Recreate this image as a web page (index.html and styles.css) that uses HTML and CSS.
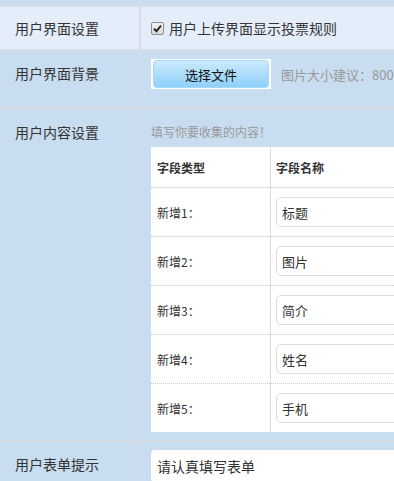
FILE: index.html
```html
<!DOCTYPE html>
<html lang="zh-CN">
<head>
  <meta charset="UTF-8">
  <title>用户设置</title>
  <link rel="stylesheet" href="styles.css">
</head>
<body>
  <div class="form">
    <div class="row row-top">
      <div class="label"></div>
      <div class="field"></div>
    </div>
    <div class="row row-hl">
      <div class="label label-mid">用户界面设置</div>
      <div class="field field-check">
        <span class="check">
          <svg width="9" height="9" viewBox="0 0 9 9"><path d="M1 4.8 L3.5 7.3 L8 1.5" fill="none" stroke="#222" stroke-width="2"/></svg>
        </span>
        <span>用户上传界面显示投票规则</span>
      </div>
    </div>
    <div class="row">
      <div class="label">用户界面背景</div>
      <div class="field field-file">
        <span class="file-wrap"><button class="file-btn">选择文件</button></span>
        <span class="tip">图片大小建议：800*480</span>
      </div>
    </div>
    <div class="row">
      <div class="label label-content">用户内容设置</div>
      <div class="field field-content">
        <p class="hint">填写你要收集的内容！</p>
        <table class="fields">
          <thead>
            <tr><th>字段类型</th><th>字段名称</th></tr>
          </thead>
          <tbody>
            <tr><td>新增1：</td><td><input class="edit" value="标题"></td></tr>
            <tr><td>新增2：</td><td><input class="edit" value="图片"></td></tr>
            <tr><td>新增3：</td><td><input class="edit" value="简介"></td></tr>
            <tr><td>新增4：</td><td><input class="edit" value="姓名"></td></tr>
            <tr><td>新增5：</td><td><input class="edit" value="手机"></td></tr>
          </tbody>
        </table>
      </div>
    </div>
    <div class="row">
      <div class="label">用户表单提示</div>
      <div class="field field-tip">
        <input class="tip-input" value="请认真填写表单">
      </div>
    </div>
  </div>
</body>
</html>
```

FILE: styles.css
```css
body { margin: 0; overflow: hidden; background: #c8ddf0; font-family: "Noto Sans CJK SC", "Noto Sans", sans-serif; color: #333; }
.form { width: 900px; }
.row { display: flex; border-bottom: 2px solid #d6dce2; background: #c8ddf0; }
.row-top { height: 5px; }
.row-hl { background: #e3eefa; height: 42px; }
.label { width: 124px; flex: none; padding: 12px 0 0 15px; border-right: 2px solid #d6dce2; font-size: 14px; line-height: 20px; }
.label-mid { padding-top: 11px; }
.label-content { padding-top: 13px; }
.field { flex: 1; padding: 0 10px; }
.field-check { display: flex; align-items: center; font-size: 14px; }
.check { width: 11px; height: 11px; border: 1px solid #8c8c8c; border-radius: 2px; background: linear-gradient(#f4f4f4, #d9d9d9); display: flex; align-items: center; justify-content: center; margin-right: 5px; }
.field-file { display: flex; align-items: center; padding-top: 8px; padding-bottom: 18px; }
.file-wrap { background: #fff; padding: 1px 2px; width: 116px; height: 28px; display: block; }
.file-btn { width: 116px; height: 28px; border: 1px solid #a6d9f7; border-radius: 4px; background: linear-gradient(#cbeafc, #8ed0f9); font-family: inherit; font-size: 13px; color: #111; padding: 0; }
.tip { margin-left: 10px; font-size: 13px; color: #999; white-space: nowrap; }
.field-content { padding-top: 15px; padding-bottom: 8px; }
.hint { margin: 0 0 7px; font-size: 12px; line-height: 16px; color: #999; }
.fields { border-collapse: collapse; background: #fff; font-size: 12px; }
.fields th { height: 40px; text-align: left; padding: 0 6px; font-weight: bold; }
.fields td { height: 48px; padding: 0 6px; border-top: 1px dotted #c8c8c8; }
.fields th:first-child, .fields td:first-child { width: 107px; }
.fields th:last-child, .fields td:last-child { width: 500px; border-left: 1px solid #dcdcdc; padding-left: 5px; }
.edit { width: 240px; height: 30px; box-sizing: border-box; border: 1px solid #dcdcdc; border-radius: 5px; padding: 0 5px; font-family: inherit; font-size: 13px; color: #333; display: block; }
.field-tip { padding-top: 8px; }
.tip-input { width: 500px; height: 32px; box-sizing: border-box; border: none; border-radius: 4px; padding: 0 6px; font-family: inherit; font-size: 14px; color: #333; display: block; }
```
